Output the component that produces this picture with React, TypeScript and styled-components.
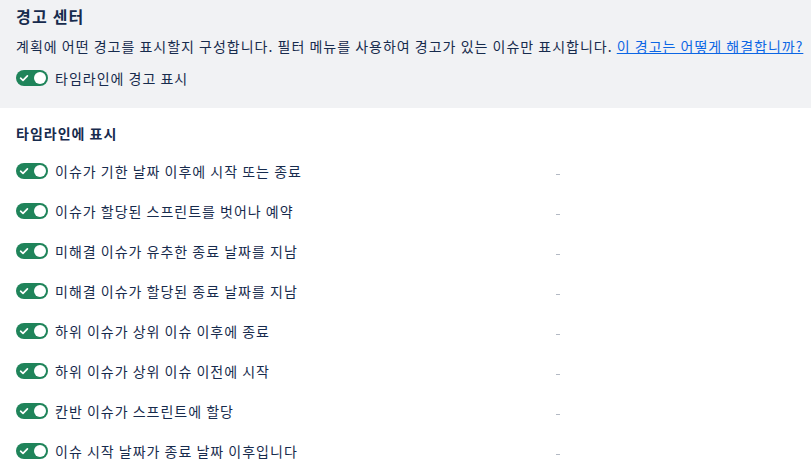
import React from "react";
import styled, { createGlobalStyle } from "styled-components";

const GlobalStyle = createGlobalStyle`
  html, body {
    margin: 0;
    padding: 0;
    background: #ffffff;
  }
  body {
    font-family: "Noto Sans CJK KR", "Noto Sans", sans-serif;
    color: #172b4d;
    letter-spacing: 1px;
  }
`;

const rules = [
  "이슈가 기한 날짜 이후에 시작 또는 종료",
  "이슈가 할당된 스프린트를 벗어나 예약",
  "미해결 이슈가 유추한 종료 날짜를 지남",
  "미해결 이슈가 할당된 종료 날짜를 지남",
  "하위 이슈가 상위 이슈 이후에 종료",
  "하위 이슈가 상위 이슈 이전에 시작",
  "칸반 이슈가 스프린트에 할당",
  "이슈 시작 날짜가 종료 날짜 이후입니다",
];

const Toggle: React.FC<{ checked?: boolean }> = ({ checked = true }) => (
  <Track $checked={checked} role="switch" aria-checked={checked}>
    <svg width="10" height="10" viewBox="0 0 10 10">
      <path
        d="M1.6 5.2 L4 7.4 L8.4 2.8"
        fill="none"
        stroke="#ffffff"
        strokeWidth="1.7"
        strokeLinecap="round"
        strokeLinejoin="round"
      />
    </svg>
    <Knob />
  </Track>
);

const App: React.FC = () => (
  <>
    <GlobalStyle />
    <Page>
      <Header>
        <Title>경고 센터</Title>
        <Description>
          계획에 어떤 경고를 표시할지 구성합니다. 필터 메뉴를 사용하여 경고가 있는 이슈만
          표시합니다. <Link href="#">이 경고는 어떻게 해결합니까?</Link>
        </Description>
        <ToggleRow>
          <Toggle />
          <Label>타임라인에 경고 표시</Label>
        </ToggleRow>
      </Header>
      <Section>
        <SectionTitle>타임라인에 표시</SectionTitle>
        <List>
          {rules.map((rule) => (
            <Rule key={rule}>
              <RuleName>
                <Toggle />
                <Label>{rule}</Label>
              </RuleName>
              <Count aria-label="없음" />
            </Rule>
          ))}
        </List>
      </Section>
    </Page>
  </>
);

const Page = styled.div`
  width: 811px;
  min-height: 471px;
  display: flex;
  flex-direction: column;
`;
const Header = styled.div`
  background-color: #f1f2f4;
  padding: 4px 16px 20px 16px;
  display: flex;
  flex-direction: column;
`;
const Title = styled.h2`
  margin: 0;
  font-size: 16px;
  line-height: 24px;
  font-weight: 700;
  letter-spacing: 1.2px;
  color: #172b4d;
`;
const Description = styled.p`
  margin: 8px 0 0 0;
  font-size: 14px;
  line-height: 20px;
  color: #172b4d;
  white-space: nowrap;
`;
const Link = styled.a`
  color: #0c66e4;
  text-decoration: underline;
`;
const ToggleRow = styled.div`
  margin-top: 12px;
  display: flex;
  align-items: center;
  gap: 7px;
  height: 20px;
`;
const Track = styled.span<{ $checked: boolean }>`
  position: relative;
  display: inline-flex;
  align-items: center;
  box-sizing: border-box;
  width: 32px;
  height: 16px;
  padding: 0 3px;
  border-radius: 8px;
  background-color: ${(p) => (p.$checked ? "#1f845a" : "#8590a2")};
  flex-shrink: 0;
`;
const Knob = styled.span`
  position: absolute;
  right: 2px;
  top: 2px;
  width: 12px;
  height: 12px;
  border-radius: 50%;
  background-color: #ffffff;
`;
const Label = styled.span`
  font-size: 14px;
  line-height: 20px;
  color: #172b4d;
`;
const Section = styled.div`
  padding: 15px 16px 0 16px;
  display: flex;
  flex-direction: column;
`;
const SectionTitle = styled.h3`
  margin: 0;
  font-size: 14px;
  line-height: 20px;
  font-weight: 700;
  color: #172b4d;
`;
const List = styled.ul`
  list-style: none;
  margin: 8px 0 0 0;
  padding: 0;
  display: flex;
  flex-direction: column;
`;
const Rule = styled.li`
  display: flex;
  align-items: center;
  height: 40px;
`;
const RuleName = styled.div`
  width: 540px;
  display: flex;
  align-items: center;
  gap: 7px;
`;
const Count = styled.span`
  display: block;
  width: 4px;
  height: 1px;
  margin-top: 6px;
  background-color: #b3b9c4;
`;

export default App;
